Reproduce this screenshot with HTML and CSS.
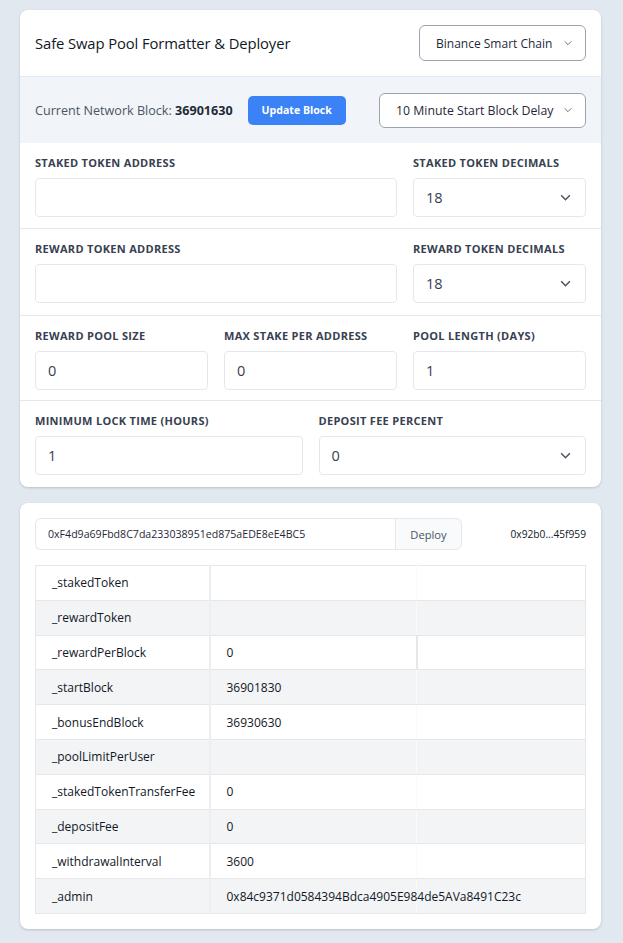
FILE: index.html
```html
<!DOCTYPE html>
<html>
<head>
<meta charset="utf-8">
<link rel="stylesheet" href="styles.css">
</head>
<body>
<div class="page">
  <section class="card">
    <header class="card-head">
      <h1 class="title">Safe Swap Pool Formatter &amp; Deployer</h1>
      <div class="select select-chain">
        <span>Binance Smart Chain</span>
        <svg class="chev chev-sm" viewBox="0 0 12 12"><path d="M2 4l4 4 4-4"/></svg>
      </div>
    </header>
    <div class="netbar">
      <div class="net-text">Current Network Block: <b>36901630</b></div>
      <button class="btn-primary">Update Block</button>
      <div class="select select-delay">
        <span>10 Minute Start Block Delay</span>
        <svg class="chev chev-sm" viewBox="0 0 12 12"><path d="M2 4l4 4 4-4"/></svg>
      </div>
    </div>
    <div class="row grid3">
      <label class="field span2"><span class="lbl">Staked Token Address</span><div class="input"></div></label>
      <label class="field"><span class="lbl">Staked Token Decimals</span><div class="input sel"><span>18</span><svg class="chev" viewBox="0 0 12 12"><path d="M2 4l4 4 4-4"/></svg></div></label>
    </div>
    <div class="row grid3 row-tall">
      <label class="field span2"><span class="lbl">Reward Token Address</span><div class="input"></div></label>
      <label class="field"><span class="lbl">Reward Token Decimals</span><div class="input sel"><span>18</span><svg class="chev" viewBox="0 0 12 12"><path d="M2 4l4 4 4-4"/></svg></div></label>
    </div>
    <div class="row grid3 row-short">
      <label class="field"><span class="lbl">Reward Pool Size</span><div class="input"><span>0</span></div></label>
      <label class="field"><span class="lbl">Max Stake Per Address</span><div class="input"><span>0</span></div></label>
      <label class="field"><span class="lbl">Pool Length (Days)</span><div class="input"><span>1</span></div></label>
    </div>
    <div class="row grid2 row-last">
      <label class="field"><span class="lbl">Minimum Lock Time (Hours)</span><div class="input"><span>1</span></div></label>
      <label class="field"><span class="lbl">Deposit Fee Percent</span><div class="input sel"><span>0</span><svg class="chev" viewBox="0 0 12 12"><path d="M2 4l4 4 4-4"/></svg></div></label>
    </div>
  </section>

  <section class="card card2">
    <div class="deploy-row">
      <div class="addr-group">
        <div class="addr">0xF4d9a69Fbd8C7da233038951ed875aEDE8eE4BC5</div>
        <button class="btn-deploy">Deploy</button>
      </div>
      <div class="short">0x92b0...45f959</div>
    </div>
    <table class="params">
      <colgroup><col class="c1"><col class="c2"><col class="c3"></colgroup>
      <tr><td>_stakedToken</td><td></td><td></td></tr>
      <tr><td>_rewardToken</td><td></td><td></td></tr>
      <tr class="split"><td>_rewardPerBlock</td><td>0</td><td></td></tr>
      <tr><td>_startBlock</td><td>36901830</td><td></td></tr>
      <tr><td>_bonusEndBlock</td><td>36930630</td><td></td></tr>
      <tr><td>_poolLimitPerUser</td><td></td><td></td></tr>
      <tr><td>_stakedTokenTransferFee</td><td>0</td><td></td></tr>
      <tr><td>_depositFee</td><td>0</td><td></td></tr>
      <tr><td>_withdrawalInterval</td><td>3600</td><td></td></tr>
      <tr><td>_admin</td><td class="nowrap">0x84c9371d0584394Bdca4905E984de5AVa8491C23c</td><td></td></tr>
    </table>
  </section>
</div>
</body>
</html>
```

FILE: styles.css
```css
* { box-sizing: border-box; }
html, body { margin: 0; padding: 0; }
body {
  background: #e2e8f0;
  font-family: "Open Sans", "Noto Sans", sans-serif;
  color: #111827;
}
.page {
  padding: 10px 22px 15px 20px;
  display: flex;
  flex-direction: column;
  gap: 16px;
}
.card {
  background: #fff;
  border-radius: 8px;
  box-shadow: 0 1px 3px rgba(0,0,0,0.12), 0 1px 2px rgba(0,0,0,0.06);
  overflow: hidden;
}
.card-head {
  display: flex;
  align-items: center;
  justify-content: space-between;
  height: 67px;
  padding: 0 15px;
  border-bottom: 1px solid #e2e8f0;
}
.title {
  margin: 0;
  font-size: 14.8px;
  font-weight: 500;
  color: #111827;
  letter-spacing: -0.1px;
}
.select {
  display: flex;
  align-items: center;
  justify-content: space-between;
  border: 1px solid #9ca3af;
  border-radius: 6px;
  background: #fff;
  font-size: 12.3px;
  color: #1f2937;
  white-space: nowrap;
}
.select-chain { width: 167px; height: 36px; padding: 0 12px 0 16px; font-size: 12px; }
.select-delay { width: 207px; height: 35px; padding: 0 12px 0 16px; }
.chev { width: 13px; height: 13px; fill: none; stroke: #4b5563; stroke-width: 1.4; flex: none; }
.chev-sm { width: 10px; height: 10px; stroke: #6b7280; stroke-width: 1.2; }
.netbar {
  display: flex;
  align-items: center;
  background: #f1f5f9;
  padding: 0 15px;
  height: 66px;
}
.net-text { font-size: 12.6px; color: #4b5563; }
.net-text b { color: #1f2937; font-weight: 700; }
.btn-primary {
  margin-left: 15px;
  background: #3b82f6;
  color: #fff;
  border: none;
  border-radius: 5px;
  font-family: inherit;
  font-size: 10.6px;
  font-weight: 700;
  height: 29px;
  width: 98px;
  padding: 0;
}
.select-delay { margin-left: auto; }
.row {
  display: grid;
  gap: 16px;
  padding: 12px 15px 11px;
  border-top: 1px solid #e5e7eb;
}
.netbar + .row { border-top: none; padding-top: 12px; }
.row-tall { padding-bottom: 12px; }
.row-short { padding-bottom: 10px; }
.row-last { padding-bottom: 12px; }
.grid3 { grid-template-columns: 1fr 1fr 1fr; }
.grid2 { grid-template-columns: 1fr 1fr; }
.span2 { grid-column: span 2; }
.field { display: flex; flex-direction: column; }
.lbl {
  font-size: 11px;
  font-weight: 700;
  text-transform: uppercase;
  letter-spacing: 0.3px;
  color: #374151;
  line-height: 16px;
  margin-bottom: 7px;
}
.input {
  height: 39px;
  border: 1px solid #e5e7eb;
  border-radius: 4px;
  display: flex;
  align-items: center;
  justify-content: space-between;
  padding: 0 13px 0 12px;
  font-size: 14.5px;
  color: #374151;
}
.card2 { padding: 15px; }
.deploy-row { display: flex; align-items: center; justify-content: space-between; }
.addr-group { display: flex; height: 32px; }
.addr {
  width: 360px;
  border: 1px solid #e5e7eb;
  border-right: none;
  border-radius: 6px 0 0 6px;
  font-size: 10.6px;
  color: #1f2937;
  display: flex;
  align-items: center;
  padding-left: 12px;
}
.btn-deploy {
  width: 67px;
  border: 1px solid #e5e7eb;
  border-radius: 0 6px 6px 0;
  background: #f8fafc;
  font-family: inherit;
  font-size: 11.2px;
  color: #4b5563;
  padding: 0;
}
.short { font-size: 10.2px; color: #111827; }
.params {
  margin-top: 15px;
  width: 100%;
  table-layout: fixed;
  border-collapse: collapse;
  font-size: 12px;
  color: #111827;
  border: 1px solid #e5e7eb;
}
.params col.c1 { width: 174px; }
.params col.c3 { width: 169px; }
.params td {
  height: 34.8px;
  padding: 0 16px;
  border-top: 1px solid #e5e7eb;
  border-bottom: 1px solid #e5e7eb;
}
.params td:first-child { border-right: 2px solid #eceef1; }
.params td:nth-child(2) { border-right: 1px solid #fafafb; }
.params tr.split td:nth-child(2) { border-right: 2px solid #e5e7eb; }
.params tr:nth-child(even) td { background: #f3f4f6; }
.nowrap { white-space: nowrap; overflow: visible; }
```
